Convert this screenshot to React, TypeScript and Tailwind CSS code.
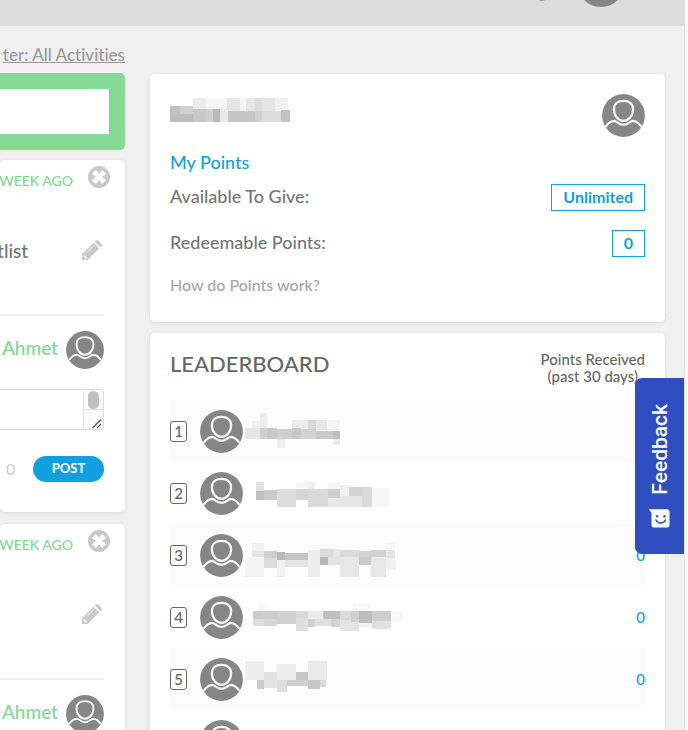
import React from "react";

type Block = [x: number, y: number, w: number, h: number, fill: string];

/** Pixelated placeholder that hides a person's name. */
function Redacted({ blocks, width, height }: { blocks: Block[]; width: number; height: number }) {
  return (
    <svg width={width} height={height} viewBox={`0 0 ${width} ${height}`} shapeRendering="crispEdges" aria-hidden="true" className="block shrink-0">
      {blocks.map(([x, y, w, h, fill], i) => (
        <rect key={i} x={x} y={y} width={w} height={h} fill={fill} />
      ))}
    </svg>
  );
}

function Avatar({ className }: { className: string }) {
  return (
    <svg viewBox="0 0 43 43" className={className} fill="none" aria-hidden="true">
      <circle cx="21.5" cy="21.5" r="21.4" fill="#868686" />
      <g stroke="#f8f8f8" strokeWidth="2.200">
        <path d="M21.500 6.900C15.400 6.900 11.900 10 11.900 15.200c0 6.600 4.600 11.600 9.600 11.600s9.600-5 9.600-11.600c0-5.200-3.500-8.300-9.600-8.300Z" />
        <path d="M3.600 32.800C6.100 29.200 9.200 27 12.200 26.900c2.700 0 4.100 3.900 9.300 3.900s6.600-3.900 9.300-3.900c3 .1 6.100 2.300 8.600 5.900" />
      </g>
    </svg>
  );
}

function CloseIcon() {
  return (
    <svg viewBox="0 0 22 22" className="size-[22px]" aria-hidden="true">
      <circle cx="11" cy="11" r="11" fill="#c9c9c9" />
      <path d="M7.800 7.800 14.200 14.200M14.200 7.800 7.800 14.200" stroke="#fff" strokeWidth="5.400" strokeLinecap="square" />
      <path d="M11 3v3.800M11 15.200V19M3 11h3.800M15.200 11H19" stroke="#c9c9c9" strokeWidth="1.800" strokeLinecap="round" />
    </svg>
  );
}

function PencilIcon() {
  return (
    <svg viewBox="0 0 20 20" className="size-5" aria-hidden="true">
      <path fill="#c9c9c9" d="M0 14.300 11.600 2.700l5.700 5.700L5.700 20H0ZM12.800 1.500l.9-.9c.8-.8 2-.8 2.800 0l2.900 2.900c.8.8.8 2 0 2.800l-.9.900Z" />
      <path d="M4.800 12.600 11.800 5.600" stroke="#fff" strokeWidth="0.900" />
      <path fill="#fff" d="M1.600 15.200l1.500.2.300 1.400 1.400.3.200 1.300H3.300L1.600 16.700Z" />
    </svg>
  );
}

function SmileBubble() {
  return (
    <svg viewBox="0 0 21 19" className="h-[19px] w-[21px]" aria-hidden="true">
      <path fill="#fff" d="M0 .3h18.200c1.300 0 2.300 1 2.300 2.300v13.600c0 1.300-1 2.300-2.300 2.300H4.800c-1.300 0-2.300-1-2.300-2.300V4.300C2.500 2.800.6 2.400 0 .3Z" />
      <circle cx="8" cy="7.300" r="1.200" fill="#2f4fc0" />
      <circle cx="15.500" cy="7.300" r="1.200" fill="#2f4fc0" />
      <path d="M7 11c.8 1.900 2.500 3 4.700 3s3.900-1.100 4.700-3" fill="none" stroke="#2f4fc0" strokeWidth="1.600" strokeLinecap="round" />
    </svg>
  );
}

const card = "rounded-[5px] bg-white shadow-[0_1px_4px_rgba(0,0,0,0.1)]";

function Activity({ title }: { title?: string }) {
  return (
    <article className={`${card} h-[352px] shrink-0 overflow-hidden pr-[21px]`}>
      <div className="-mr-[6px] flex justify-end gap-[15px] pt-[6px]">
        <span className="pt-[5px] text-[14px] leading-5 whitespace-nowrap text-[#7fd893]">WEEK AGO</span>
        <button type="button" aria-label="Remove activity" className="size-[22px]">
          <CloseIcon />
        </button>
      </div>
      <div className="mt-12 flex h-6 items-center justify-between">
        <h3 className="-ml-[3px] text-[19px] leading-6 text-[#757575]">{title}</h3>
        <button type="button" aria-label="Edit activity" className="mr-[2px] mb-[2px] size-5">
          <PencilIcon />
        </button>
      </div>
      <div className="mt-[51px] border-t-2 border-[#f0f0f0]" />
      <div className="mt-[15px] flex items-center justify-end gap-2">
        <a href="#ahmet" className="pb-1 text-[19px] leading-6 text-[#7fd893]">Ahmet</a>
        <Avatar className="size-[38px]" />
      </div>
      <div className="mt-5 flex h-[41px] overflow-hidden rounded-r-[4px] border border-l-0 border-[#dcdcdc]">
        <textarea aria-label="Comment" className="min-w-0 flex-1 resize-none overflow-hidden bg-white outline-none" />
        <svg viewBox="0 0 20 39" className="h-[39px] w-5 shrink-0" aria-hidden="true">
          <rect width="20" height="39" fill="#fafafa" />
          <path d="M.5 0v39M0 19.500h20" stroke="#e4e4e4" />
          <rect x="5" y="1" width="11" height="18" rx="5.500" fill="#c1c1c1" />
          <path d="M9.500 38 18 29.500M14 38l4-4" stroke="#555" strokeWidth="1.200" />
        </svg>
      </div>
      <div className="mt-[26px] flex items-center justify-between">
        <span className="pl-[6px] text-[16px] leading-5 text-[#cfcfcf]">0</span>
        <button type="button" className="h-[26px] w-[71px] rounded-full bg-[#129fdf] text-[13px] font-bold text-white">POST</button>
      </div>
    </article>
  );
}

const ownName: Block[] = [
  [0, 8, 10, 8, "#c0c0c0"], [10, 8, 13, 8, "#d0d0d0"], [0, 16, 23, 8, "#bdbdbd"],
  [23, 0, 13, 11, "#ebebeb"], [36, 0, 21, 11, "#f6f6f6"], [57, 0, 13, 13, "#e4e4e4"], [70, 0, 6, 13, "#f5f5f5"], [76, 0, 9, 13, "#e6e6e6"], [85, 0, 7, 13, "#dcdcdc"], [92, 0, 13, 13, "#e5e5e5"], [105, 0, 13, 12, "#f0f0f0"],
  [23, 11, 13, 13, "#c7c7c7"], [36, 11, 7, 13, "#d0d0d0"], [43, 11, 7, 13, "#b9b9b9"], [50, 11, 8, 13, "#e8e8e8"], [58, 13, 27, 11, "#c5c5c5"], [85, 13, 7, 11, "#d0d0d0"], [92, 13, 19, 11, "#dcdcdc"], [111, 12, 9, 12, "#c3c3c3"],
];

const leaders: { blocks: Block[]; points: number }[] = [
  {
    points: 0,
    blocks: [
      [15, 13, 7, 15, "#ededed"], [7, 21, 8, 7, "#f0f0f0"], [47, 20, 16, 8, "#ebebeb"], [63, 20, 8, 10, "#d8d8d8"], [71, 20, 11, 10, "#e7e7e7"], [82, 20, 13, 10, "#f5f5f5"],
      [0, 28, 15, 11, "#e5e5e5"], [15, 28, 7, 11, "#d0d0d0"], [22, 28, 10, 11, "#c9c9c9"], [32, 29, 15, 10, "#cfcfcf"], [47, 28, 9, 11, "#c8c8c8"], [56, 29, 15, 10, "#d3d3d3"], [71, 31, 17, 8, "#cacaca"], [88, 31, 7, 8, "#c0c0c0"],
      [32, 39, 8, 9, "#eeeeee"], [88, 39, 7, 6, "#ececec"],
    ],
  },
  {
    points: 0,
    blocks: [
      [11, 20, 8, 9, "#e1e1e1"], [51, 20, 12, 6, "#f6f6f6"], [63, 20, 7, 7, "#eeeeee"], [82, 20, 13, 7, "#f6f6f6"], [95, 23, 9, 11, "#f1f1f1"],
      [11, 29, 8, 9, "#bfbfbf"], [19, 28, 13, 10, "#cacaca"], [32, 27, 19, 18, "#dcdcdc"], [51, 27, 12, 11, "#d5d5d5"], [63, 27, 20, 18, "#dadada"], [83, 27, 12, 9, "#cfcfcf"], [83, 36, 12, 9, "#e9e9e9"], [95, 34, 22, 11, "#e6e6e6"], [104, 25, 13, 9, "#d3d3d3"], [117, 25, 10, 11, "#dadada"], [117, 36, 10, 9, "#d9d9d9"], [127, 26, 17, 19, "#f6f6f6"],
    ],
  },
  {
    points: 0,
    blocks: [
      [7, 19, 12, 8, "#f3f3f3"], [0, 34, 19, 19, "#f3f3f3"], [7, 27, 12, 6, "#e4e4e4"], [19, 27, 13, 7, "#cfcfcf"], [19, 34, 13, 10, "#dddddd"], [32, 28, 8, 8, "#b9b9b9"], [40, 29, 23, 7, "#c5c5c5"], [32, 36, 8, 17, "#f2f2f2"], [40, 36, 23, 7, "#e6e6e6"], [63, 26, 12, 27, "#eeeeee"], [75, 25, 13, 8, "#dadada"], [75, 33, 8, 8, "#b7b7b7"], [83, 33, 12, 8, "#e3e3e3"], [88, 25, 7, 8, "#e8e8e8"], [95, 26, 19, 7, "#dadada"], [95, 33, 19, 20, "#e7e7e7"], [114, 27, 12, 6, "#d3d3d3"], [114, 33, 12, 8, "#c9c9c9"], [126, 26, 15, 7, "#d2d2d2"], [126, 33, 15, 20, "#e7e7e7"], [141, 26, 9, 8, "#e3e3e3"], [141, 34, 10, 12, "#f1f1f1"], [141, 19, 9, 7, "#f7f7f7"],
    ],
  },
  {
    points: 0,
    blocks: [
      [12, 18, 10, 7, "#fafafa"], [108, 17, 18, 8, "#f8f8f8"],
      [8, 25, 24, 8, "#cccccc"], [8, 33, 11, 7, "#dddddd"], [19, 33, 13, 7, "#d6d6d6"], [32, 25, 19, 13, "#d1d1d1"], [51, 25, 12, 7, "#d9d9d9"], [51, 32, 12, 13, "#dedede"], [63, 25, 14, 8, "#ebebeb"], [63, 33, 7, 8, "#d0d0d0"], [70, 33, 16, 7, "#dfdfdf"], [78, 25, 17, 8, "#c0c0c0"], [86, 33, 9, 8, "#d4d4d4"], [95, 25, 19, 9, "#dadada"], [95, 34, 19, 11, "#e4e4e4"], [106, 25, 8, 11, "#d1d1d1"], [114, 25, 13, 12, "#bfbfbf"], [127, 25, 19, 10, "#cfcfcf"], [127, 35, 19, 8, "#e1e1e1"], [114, 37, 13, 4, "#f0f0f0"], [146, 25, 12, 11, "#f8f8f8"],
    ],
  },
  {
    points: 0,
    blocks: [
      [0, 13, 19, 19, "#eeeeee"], [32, 16, 19, 16, "#ededed"], [63, 13, 19, 19, "#eaeaea"], [19, 24, 13, 8, "#e2e2e2"], [51, 24, 12, 8, "#c7c7c7"],
      [12, 32, 7, 9, "#c9c9c9"], [19, 32, 13, 8, "#e3e3e3"], [32, 32, 10, 12, "#dedede"], [42, 32, 21, 6, "#d1d1d1"], [63, 32, 12, 9, "#c6c6c6"], [75, 32, 6, 7, "#dcdcdc"],
    ],
  },
  { points: 0, blocks: [] },
];

export default function App() {
  return (
    <div className="flex h-screen overflow-hidden bg-[#fafafa] font-['Lato',sans-serif] font-medium text-[#757575] [font-variant-ligatures:none]">
      <div className="flex min-w-0 flex-1 flex-col border-r border-[#e2e2e2] bg-[#f0f0f0]">
        <header className="flex h-[26px] shrink-0 items-end justify-end gap-[29px] overflow-hidden bg-[#dddddd] pr-[59px] pb-[19px]">
          <span className="mb-[6px] size-3 shrink-0 rounded-full bg-[#999999]" />
          <span className="size-12 shrink-0 rounded-full bg-[#868686]" />
        </header>

        <main className="flex min-h-0 flex-1 gap-[25px] pr-[19px]">
          <section className="flex w-[125px] shrink-0 flex-col">
            <a href="#filter" className="mt-[17px] text-right text-[17px] leading-6 whitespace-nowrap text-[#999999] underline">
              ter: All Activities
            </a>
            <div className="mt-[6px] h-[77px] shrink-0 rounded-r-[5px] bg-[#84d995] py-4 pr-4">
              <input type="text" aria-label="Write a post" className="block h-[45px] w-full bg-white outline-none" />
            </div>
            <div className="mt-[10px] flex flex-col gap-3">
              <Activity title="tlist" />
              <Activity />
            </div>
          </section>

          <section className="mt-12 flex min-w-0 flex-1 flex-col gap-[11px]">
            <div className={`${card} px-5 pt-5 pb-[25px]`}>
              <div className="flex items-start justify-between">
                <div className="pt-1">
                  <Redacted blocks={ownName} width={121} height={24} />
                </div>
                <Avatar className="size-[43px]" />
              </div>
              <h2 className="mt-[13px] text-[18px] leading-6 text-[#129fdf]">My Points</h2>
              <dl>
                <div className="mt-[10px] flex h-[27px] items-center justify-between">
                  <dt className="pb-1 text-[18px] leading-6">Available To Give:</dt>
                  <dd className="flex h-[27px] items-center border border-[#129fdf] px-[11px] pb-px text-[16px] font-bold text-[#129fdf]">Unlimited</dd>
                </div>
                <div className="mt-[19px] flex h-[27px] items-center justify-between">
                  <dt className="pb-1 text-[18px] leading-6">Redeemable Points:</dt>
                  <dd className="flex h-[27px] items-center border border-[#129fdf] px-[11px] pb-px text-[16px] font-bold text-[#129fdf]">0</dd>
                </div>
              </dl>
              <a href="#points" className="mt-4 block text-[16px] leading-6 text-[#a5a5a5]">How do Points work?</a>
            </div>

            <div className={`${card} px-5 pt-[17px]`}>
              <div className="flex h-[50px] items-start justify-between">
                <h2 className="text-[22px] leading-7 text-[#666666]">LEADERBOARD</h2>
                <p className="pt-px text-center text-[15px] leading-[17px] text-[#666666]">
                  Points Received
                  <br />
                  (past 30 days)
                </p>
              </div>
              <ol>
                {leaders.map((leader, i) => (
                  <li key={i} className="flex h-[62px] items-center odd:bg-[#fcfcfc]">
                    <span className="flex h-[21px] w-[17px] items-center justify-center rounded-[3px] border border-[#666666] text-[15px] leading-5 text-[#666666]">
                      {i + 1}
                    </span>
                    <Avatar className="ml-[13px] size-[43px]" />
                    <div className="ml-[2px] flex-1">
                      <Redacted blocks={leader.blocks} width={160} height={62} />
                    </div>
                    <span className="text-[15px] leading-5 text-[#129fdf]">{leader.points}</span>
                  </li>
                ))}
              </ol>
            </div>
          </section>
        </main>
      </div>
      <div className="w-[3px] shrink-0" />

      <button type="button" className="fixed top-[378px] right-1 flex h-[176px] w-[49px] flex-col items-center justify-end gap-[14px] rounded-l-[7px] bg-[#2f4fc0] pb-[26px] text-white">
        <span className="rotate-180 font-['Roboto',sans-serif] text-[21px] leading-6 font-medium [writing-mode:vertical-rl]">Feedback</span>
        <SmileBubble />
      </button>
    </div>
  );
}
